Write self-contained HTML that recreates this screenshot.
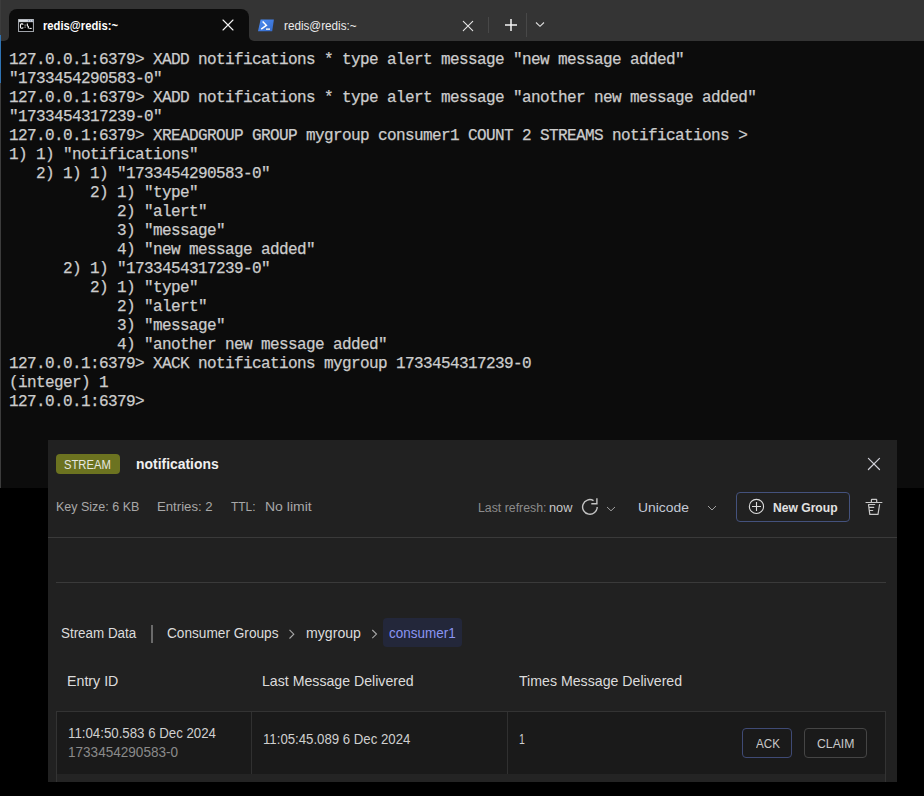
<!DOCTYPE html>
<html><head><meta charset="utf-8">
<style>
*{box-sizing:border-box;margin:0;padding:0}
html,body{width:924px;height:796px;overflow:hidden;background:#000;position:relative;font-family:"Liberation Sans",sans-serif}
.a{position:absolute;white-space:pre}
.t{position:absolute;white-space:pre;line-height:normal;transform-origin:0 0;font-family:"Liberation Sans",sans-serif}
.g{background:#343434}
#pre{left:9px;top:51px;font-family:"Liberation Mono",monospace;font-size:16px;letter-spacing:-0.6px;line-height:19px;color:#cccccc;-webkit-text-stroke:0.25px #cccccc}
</style></head><body>
<!-- terminal -->
<div class="a" style="left:0;top:33px;width:924px;height:455px;background:#0c0c0c"></div>
<div class="a g" style="left:0;top:0;width:924px;height:33px"></div>
<div class="a g" style="left:0;top:0;width:9px;height:41px;border-bottom-right-radius:5px"></div>
<div class="a g" style="left:249px;top:0;width:675px;height:41px;border-bottom-left-radius:5px"></div>
<div class="a" style="left:9px;top:9px;width:240px;height:32px;background:#0c0c0c;border-radius:8px 8px 0 0"></div>
<div class="a" style="left:0;top:0;width:1px;height:488px;background:#3c3c3c"></div>
<div class="a" style="left:0;top:35px;width:1px;height:48px;background:#2f73b3"></div>
<!-- tab1 icon (cmd) -->
<svg class="a" style="left:18px;top:19px" width="16" height="13" viewBox="0 0 16 13">
<rect x="0" y="0" width="16" height="13" fill="#9ea2a8"/>
<rect x="0.8" y="0.6" width="14.4" height="2.2" fill="#d8dce2"/>
<circle cx="10.4" cy="1.7" r="0.55" fill="#5a6f9a"/><circle cx="12.4" cy="1.7" r="0.55" fill="#5a6f9a"/><circle cx="14.4" cy="1.7" r="0.55" fill="#5a6f9a"/>
<rect x="1.1" y="3.2" width="13.8" height="8.8" fill="#000"/>
<path d="M5.2 5.6Q4.9 4.9 4 4.9H3.4Q2.5 4.9 2.5 6V8.1Q2.5 9.3 3.4 9.3H4Q4.9 9.3 5.2 8.5" stroke="#fff" stroke-width="1.1" fill="none"/>
<rect x="6.6" y="5.6" width="1" height="1" fill="#fff"/><rect x="6.6" y="7.6" width="1" height="1" fill="#fff"/>
<path d="M9.3 4.6V6.6L10.3 7.6V9.6" stroke="#fff" stroke-width="1.1" fill="none"/>
<rect x="11.3" y="8.9" width="2.4" height="1" fill="#fff"/>
</svg>
<svg class="a" style="left:221px;top:18px" width="14" height="14" viewBox="0 0 14 14"><path d="M2 2L12 12M12 2L2 12" stroke="#f4f4f4" stroke-width="1.1" stroke-linecap="round"/></svg>
<!-- tab2 -->
<svg class="a" style="left:258px;top:19px" width="17" height="13" viewBox="0 0 17 13">
<defs><linearGradient id="pg" x1="0" y1="0" x2="1" y2="1"><stop offset="0" stop-color="#4d8ef5"/><stop offset="1" stop-color="#3469c8"/></linearGradient></defs>
<path d="M2.6 0.4H15.9L14.2 12.3H0Z" fill="url(#pg)"/>
<path d="M4.6 2.5L8.4 6.3L3.2 10.1" stroke="#fff" stroke-width="1.5" fill="none"/>
<rect x="8" y="9.4" width="4" height="1.5" fill="#f0f0f0"/>
</svg>
<svg class="a" style="left:461px;top:19px" width="14" height="14" viewBox="0 0 14 14"><path d="M2.3 2.3L11.7 11.7M11.7 2.3L2.3 11.7" stroke="#e6e6e6" stroke-width="1.1" stroke-linecap="round"/></svg>
<div class="a" style="left:488px;top:17px;width:1px;height:16px;background:#484848"></div>
<svg class="a" style="left:504px;top:18px" width="14" height="14" viewBox="0 0 14 14"><path d="M7 1V13M1 7H13" stroke="#f4f4f4" stroke-width="1.5"/></svg>
<div class="a" style="left:526px;top:13px;width:1px;height:24px;background:#484848"></div>
<svg class="a" style="left:535px;top:21px" width="10" height="7" viewBox="0 0 10 7"><path d="M1 1.5L5 5.3L9 1.5" stroke="#e0e0e0" stroke-width="1.1" fill="none"/></svg>
<div id="pre" class="a">127.0.0.1:6379&gt; XADD notifications * type alert message "new message added"
"1733454290583-0"
127.0.0.1:6379&gt; XADD notifications * type alert message "another new message added"
"1733454317239-0"
127.0.0.1:6379&gt; XREADGROUP GROUP mygroup consumer1 COUNT 2 STREAMS notifications &gt;
1) 1) "notifications"
   2) 1) 1) "1733454290583-0"
         2) 1) "type"
            2) "alert"
            3) "message"
            4) "new message added"
      2) 1) "1733454317239-0"
         2) 1) "type"
            2) "alert"
            3) "message"
            4) "another new message added"
127.0.0.1:6379&gt; XACK notifications mygroup 1733454317239-0
(integer) 1
127.0.0.1:6379&gt;</div>
<!-- panel -->
<div class="a" style="left:48px;top:440px;width:849px;height:342px;background:#212121"></div>
<div class="a" style="left:56px;top:454px;width:64px;height:20px;background:#6c7320;border-radius:4px"></div>
<svg class="a" style="left:866px;top:456px" width="16" height="16" viewBox="0 0 16 16"><path d="M2.4 2.4L13.5 13.5M13.5 2.4L2.4 13.5" stroke="#d0d0d8" stroke-width="1.2" stroke-linecap="round"/></svg>

<svg class="a" style="left:580px;top:496px" width="20" height="20" viewBox="0 0 20 20"><path d="M13.55 4.58A7.3 7.3 0 1 0 17.2 10.9" stroke="#c4c4c4" stroke-width="1.4" fill="none"/><path d="M16.9 2.3V7.7H11.3" stroke="#c4c4c4" stroke-width="1.4" fill="none"/></svg>
<svg class="a" style="left:605px;top:505px" width="12" height="8" viewBox="0 0 12 8"><path d="M2 2L6 5.8L10 2" stroke="#a0a0a0" stroke-width="1" fill="none"/></svg>
<svg class="a" style="left:706px;top:504px" width="12" height="8" viewBox="0 0 12 8"><path d="M2 2L6 6L10 2" stroke="#a0a0a0" stroke-width="1" fill="none"/></svg>
<div class="a" style="left:736px;top:492px;width:114px;height:30px;border:1px solid #44527d;border-radius:4px"></div>
<svg class="a" style="left:746px;top:496px" width="20" height="20" viewBox="0 0 20 20"><circle cx="10.45" cy="10.45" r="7.1" stroke="#dcdcdc" stroke-width="1.1" fill="none"/><path d="M10.5 6.1V15M6 10.5H15" stroke="#dcdcdc" stroke-width="1.1"/></svg>
<svg class="a" style="left:864px;top:497px" width="20" height="20" viewBox="0 0 20 20"><path d="M2 5.5H17.9M7.4 5.5V2.9Q7.4 2.4 7.9 2.4H12.2Q12.7 2.4 12.7 2.9V5.5M10.7 7.5H4.5L5.8 17.4H14L15.6 7.5M5 10.4H9.7M5.4 13.5H8.7" stroke="#c8c8c8" stroke-width="1.2" fill="none" stroke-linejoin="round" stroke-linecap="round"/></svg>

<div class="a" style="left:48px;top:537px;width:849px;height:1px;background:#3a3a3a"></div>
<div class="a" style="left:56px;top:582px;width:830px;height:1px;background:#3a3a3a"></div>

<div class="a" style="left:151px;top:625px;width:2px;height:18px;background:#6a6a6a"></div>
<svg class="a" style="left:288px;top:628px" width="8" height="12" viewBox="0 0 8 12"><path d="M1.5 1.8L5.8 6.2L1.5 10.5" stroke="#a8a8a8" stroke-width="1.1" fill="none"/></svg>
<svg class="a" style="left:371px;top:628px" width="8" height="12" viewBox="0 0 8 12"><path d="M1.3 2L5.5 6.1L1.3 10.1" stroke="#a8a8a8" stroke-width="1.1" fill="none"/></svg>
<div class="a" style="left:383px;top:618px;width:79px;height:29px;background:#23273a;border-radius:4px"></div>

<div class="a" style="left:56px;top:711px;width:830px;height:71px;background:#242424;border:1px solid #333;border-bottom:none"></div>
<div class="a" style="left:57px;top:712px;width:828px;height:62px;background:#1a1a1a"></div>
<div class="a" style="left:251px;top:712px;width:1px;height:62px;background:#303030"></div>
<div class="a" style="left:507px;top:712px;width:1px;height:62px;background:#303030"></div>
<div class="a" style="left:742px;top:728px;width:50px;height:30px;border:1px solid #3f4a75;border-radius:4px"></div>
<div class="a" style="left:804px;top:728px;width:63px;height:30px;border:1px solid #454545;border-radius:4px"></div>
<div class="t" style="left:64.39px;top:458.07px;font-size:12.31px;font-weight:normal;transform:scaleX(0.9147);color:#e6e8e0">STREAM</div>
<div class="t" style="left:136.38px;top:456.1px;font-size:14.51px;font-weight:bold;transform:scaleX(0.9599);color:#f0f0f0">notifications</div>
<div class="t" style="left:55.88px;top:498.98px;font-size:13.61px;font-weight:normal;transform:scaleX(0.9177);color:#a8a8a8">Key Size: 6 KB</div>
<div class="t" style="left:156.83px;top:498.98px;font-size:13.61px;font-weight:normal;transform:scaleX(0.9685);color:#a8a8a8">Entries: 2</div>
<div class="t" style="left:230.72px;top:498.98px;font-size:13.61px;font-weight:normal;transform:scaleX(0.8776);color:#a8a8a8">TTL:</div>
<div class="t" style="left:265.38px;top:498.98px;font-size:13.61px;font-weight:normal;transform:scaleX(1.0289);color:#a8a8a8">No limit</div>
<div class="t" style="left:478.06px;top:501.13px;font-size:12.47px;font-weight:normal;transform:scaleX(0.9876);color:#8c8c8c">Last refresh:</div>
<div class="t" style="left:548.73px;top:501.13px;font-size:12.47px;font-weight:normal;transform:scaleX(1.022);color:#c8c8c8">now</div>
<div class="t" style="left:637.9px;top:500.18px;font-size:13.61px;font-weight:normal;transform:scaleX(1.0189);color:#c3c9d6">Unicode</div>
<div class="t" style="left:772.87px;top:500.73px;font-size:12.03px;font-weight:bold;transform:scaleX(1.0068);color:#e2e2e2">New Group</div>
<div class="t" style="left:61.14px;top:625.22px;font-size:14.61px;font-weight:normal;transform:scaleX(0.9172);color:#dcdcdc">Stream Data</div>
<div class="t" style="left:166.65px;top:625.12px;font-size:14.61px;font-weight:normal;transform:scaleX(0.9342);color:#dcdcdc">Consumer Groups</div>
<div class="t" style="left:306.17px;top:624.92px;font-size:14.61px;font-weight:normal;transform:scaleX(0.967);color:#dcdcdc">mygroup</div>
<div class="t" style="left:388.64px;top:625.22px;font-size:14.61px;font-weight:normal;transform:scaleX(0.9222);color:#8a95f2">consumer1</div>
<div class="t" style="left:67.47px;top:673.27px;font-size:14.4px;font-weight:normal;transform:scaleX(0.9879);color:#dcdcdc">Entry ID</div>
<div class="t" style="left:262.38px;top:673.07px;font-size:14.4px;font-weight:normal;transform:scaleX(0.9829);color:#dcdcdc">Last Message Delivered</div>
<div class="t" style="left:519.08px;top:672.97px;font-size:14.4px;font-weight:normal;transform:scaleX(0.9837);color:#dcdcdc">Times Message Delivered</div>
<div class="t" style="left:68.09px;top:724.87px;font-size:14.4px;font-weight:normal;transform:scaleX(0.9215);color:#cfcfcf">11:04:50.583 6 Dec 2024</div>
<div class="t" style="left:68.07px;top:743.77px;font-size:14.4px;font-weight:normal;transform:scaleX(0.9423);color:#8a8a8a">1733454290583-0</div>
<div class="t" style="left:263.29px;top:730.77px;font-size:14.4px;font-weight:normal;transform:scaleX(0.9178);color:#cfcfcf">11:05:45.089 6 Dec 2024</div>
<div class="t" style="left:519.16px;top:730.97px;font-size:14.4px;font-weight:normal;transform:scaleX(0.7307);color:#cfcfcf">1</div>
<div class="t" style="left:755.55px;top:736.18px;font-size:13.08px;font-weight:normal;transform:scaleX(0.8902);color:#c8c8c8">ACK</div>
<div class="t" style="left:817.01px;top:736.18px;font-size:13.08px;font-weight:normal;transform:scaleX(0.935);color:#c8c8c8">CLAIM</div>
<div class="t" style="left:43.34px;top:18.05px;font-size:13.53px;font-weight:bold;transform:scaleX(0.831);color:#ffffff">redis@redis:~</div>
<div class="t" style="left:283.91px;top:18.18px;font-size:13.53px;font-weight:normal;transform:scaleX(0.8648);color:#ececec">redis@redis:~</div>
</body></html>
